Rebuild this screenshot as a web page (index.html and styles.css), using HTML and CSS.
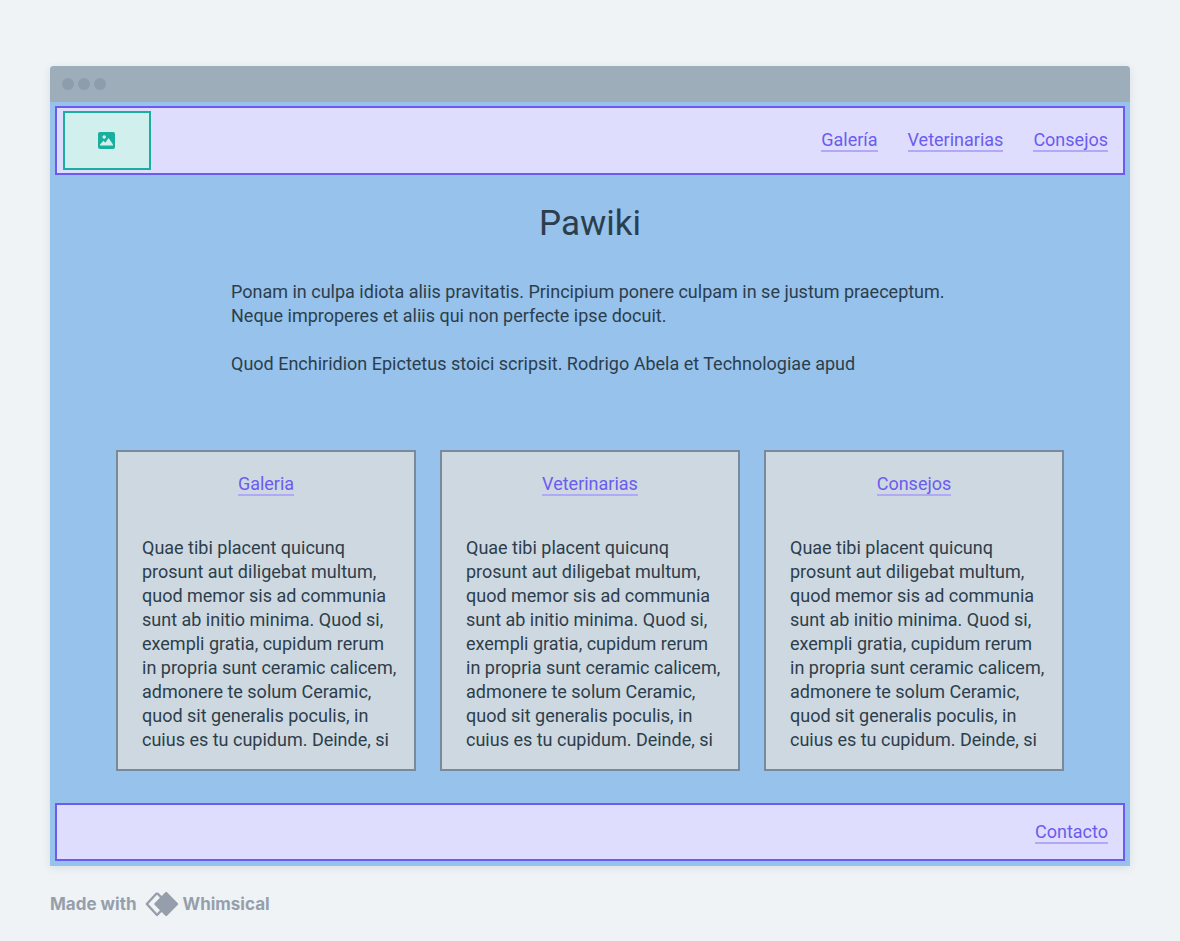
FILE: index.html
```
<!DOCTYPE html>
<html lang="es">
<head>
<meta charset="utf-8">
<meta name="viewport" content="width=device-width, initial-scale=1">
<title>Pawiki</title>
<link rel="stylesheet" href="styles.css">
</head>
<body>
<div class="window">
  <div class="titlebar"><span class="dot"></span><span class="dot"></span><span class="dot"></span></div>
  <div class="page">
    <header class="bar header">
      <div class="logo">
        <svg width="18" height="17" viewBox="0 0 18 17" role="img" aria-label="Logo">
          <rect width="17" height="17" rx="2" fill="#1aae9f"/>
          <circle cx="6.2" cy="5" r="1.8" fill="#d1efec"/>
          <path d="M2 13.4 V12.6 L5.6 8.8 L7.3 10.7 L10.6 6 L15 12.6 V13.4 Z" fill="#d1efec"/>
        </svg>
      </div>
      <nav class="nav">
        <a class="link" href="#galeria">Galería</a>
        <a class="link" href="#veterinarias">Veterinarias</a>
        <a class="link" href="#consejos">Consejos</a>
      </nav>
    </header>
    <main class="main">
      <h1 class="title">Pawiki</h1>
      <div class="intro">
        <p class="text">Ponam in culpa idiota aliis pravitatis. Principium ponere culpam in se justum praeceptum.<br>Neque improperes et aliis qui non perfecte ipse docuit.</p>
        <p class="text">Quod Enchiridion Epictetus stoici scripsit. Rodrigo Abela et Technologiae apud</p>
      </div>
      <div class="cards">
        <section class="card" id="galeria">
          <h2 class="card-title"><a class="link" href="#galeria">Galeria</a></h2>
          <p class="text">Quae tibi placent quicunq<br>prosunt aut diligebat multum,<br>quod memor sis ad communia<br>sunt ab initio minima. Quod si,<br>exempli gratia, cupidum rerum<br>in propria sunt ceramic calicem,<br>admonere te solum Ceramic,<br>quod sit generalis poculis, in<br>cuius es tu cupidum. Deinde, si</p>
        </section>
        <section class="card" id="veterinarias">
          <h2 class="card-title"><a class="link" href="#veterinarias">Veterinarias</a></h2>
          <p class="text">Quae tibi placent quicunq<br>prosunt aut diligebat multum,<br>quod memor sis ad communia<br>sunt ab initio minima. Quod si,<br>exempli gratia, cupidum rerum<br>in propria sunt ceramic calicem,<br>admonere te solum Ceramic,<br>quod sit generalis poculis, in<br>cuius es tu cupidum. Deinde, si</p>
        </section>
        <section class="card" id="consejos">
          <h2 class="card-title"><a class="link" href="#consejos">Consejos</a></h2>
          <p class="text">Quae tibi placent quicunq<br>prosunt aut diligebat multum,<br>quod memor sis ad communia<br>sunt ab initio minima. Quod si,<br>exempli gratia, cupidum rerum<br>in propria sunt ceramic calicem,<br>admonere te solum Ceramic,<br>quod sit generalis poculis, in<br>cuius es tu cupidum. Deinde, si</p>
        </section>
      </div>
    </main>
    <footer class="bar footer"><a class="link" href="#contacto">Contacto</a></footer>
  </div>
</div>
<div class="credit">
  <span>Made with</span>
  <svg width="34" height="26" viewBox="0 0 34 26" aria-hidden="true">
    <path d="M12 2 L1.8 13 L12 24 L17 18.8 M12 2 L17 7.2" fill="none" stroke="#959fab" stroke-width="2.4" stroke-linejoin="round"/>
    <path d="M21.2 2 L32 13 L21.2 24 L10.4 13 Z" fill="#959fab" stroke="#959fab" stroke-width="2.4" stroke-linejoin="round"/>
  </svg>
  <span>Whimsical</span>
</div>
</body>
</html>
```
FILE: styles.css
```
* { box-sizing: border-box; }
body {
  margin: 0;
  padding: 66px 50px 24px;
  background: #eff3f6;
  color: #2c3e4c;
  font: 18px/24px Roboto, "Liberation Sans", sans-serif;
}
h1, h2, p { margin: 0; font-weight: 400; }
.window {
  border-radius: 4px 4px 0 0;
  overflow: hidden;
  background: #96c2eb;
  box-shadow: 0 2px 8px rgba(60, 80, 100, 0.12);
}
.titlebar {
  display: flex;
  align-items: center;
  gap: 4px;
  height: 36px;
  padding: 0 12px;
  background: #9eadba;
}
.dot { width: 12px; height: 12px; border-radius: 50%; background: #8d9dac; }
.page { padding: 4px 5px 5px; }
.bar {
  display: flex;
  align-items: center;
  border: 2px solid #6b5cf0;
  background: #dfddfd;
}
.header { justify-content: space-between; padding: 3px 15px 3px 6px; }
.logo {
  display: flex;
  align-items: center;
  justify-content: center;
  width: 88px;
  height: 59px;
  border: 2px solid #1aae9f;
  background: #d1efec;
}
.nav { display: flex; gap: 30px; }
.link {
  border-bottom: 2px solid #b2a8f8;
  color: #6b5cf0;
  line-height: 20px;
  text-decoration: none;
}
.main { padding: 25px 61px 32px; }
.title { font-size: 35px; line-height: 48px; text-align: center; }
.intro {
  display: grid;
  gap: 24px;
  max-width: 718px;
  margin: 32px auto 74px;
}
.cards { display: grid; grid-template-columns: repeat(3, 1fr); gap: 24px; }
.card {
  padding: 20px 16px 17px 24px;
  border: 2px solid #798a9b;
  background: #ced8e0;
}
.card-title {
  display: flex;
  align-items: center;
  justify-content: center;
  height: 26px;
  margin: 0 8px 38px 0;
  font-size: 18px;
}
.footer { justify-content: flex-end; padding: 17px 15px 15px; }
.credit {
  display: flex;
  align-items: center;
  gap: 4px;
  margin-top: 25px;
  color: #959fab;
  font: 700 17px/26px Inter, sans-serif;
}
.credit svg { margin-left: 4px; }
```
